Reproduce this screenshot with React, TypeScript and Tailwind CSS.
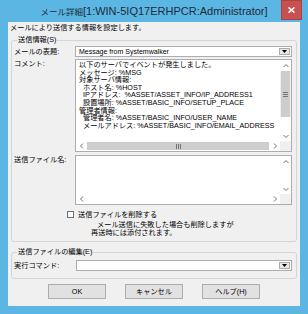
import React from "react";

const ui = "font-['Liberation_Sans','Noto_Sans_CJK_JP',sans-serif]";

function Chevron({ dir }: { dir: "up" | "down" | "left" | "right" }) {
  const pts = {
    up: "1.5,5 4,2.5 6.5,5",
    down: "1.5,3 4,5.5 6.5,3",
    left: "5,1.5 2.5,4 5,6.5",
    right: "3,1.5 5.5,4 3,6.5",
  }[dir];
  return (
    <svg width="8" height="8" viewBox="0 0 8 8">
      <polyline points={pts} fill="none" stroke="#606060" strokeWidth="0.9" />
    </svg>
  );
}

function VScroll({ thumb }: { thumb: boolean }) {
  return (
    <div className="flex w-[11px] flex-col bg-[#f0f0f0]">
      <div className="flex h-[11px] items-center justify-center bg-white">
        <Chevron dir="up" />
      </div>
      {thumb ? (
        <>
          <div className="mx-[1px] flex h-[46px] items-center justify-center bg-[#cdcdcd]">
            <svg width="5" height="5" viewBox="0 0 5 5">
              <path d="M0 0.5H5M0 2.5H5M0 4.5H5" stroke="#606060" strokeWidth="0.8" />
            </svg>
          </div>
          <div className="flex-1 bg-white" />
        </>
      ) : (
        <div className="flex-1 bg-white" />
      )}
      <div className="flex h-[11px] items-center justify-center bg-white">
        <Chevron dir="down" />
      </div>
    </div>
  );
}

function HScroll({ thumb }: { thumb: boolean }) {
  return (
    <div className="flex h-[10px] bg-white">
      <div className="flex w-[11px] items-center justify-center">
        <Chevron dir="left" />
      </div>
      {thumb ? (
        <div className="my-[1px] flex flex-1 items-center justify-center bg-[#cdcdcd]">
          <svg width="5" height="5" viewBox="0 0 5 5">
            <path d="M0.5 0V5M2.5 0V5M4.5 0V5" stroke="#606060" strokeWidth="0.8" />
          </svg>
        </div>
      ) : (
        <div className="flex-1" />
      )}
      <div className="flex w-[11px] items-center justify-center">
        <Chevron dir="right" />
      </div>
      <div className="w-[11px] bg-[#f0f0f0]" />
    </div>
  );
}

function Combo({ text }: { text?: string }) {
  return (
    <div className="flex h-[11px] items-center border border-[#abadb3] bg-white">
      <span className="flex-1 overflow-hidden whitespace-nowrap pl-[3px] text-[7px] leading-[9px]">
        {text}
      </span>
      <div className="mr-[1px] flex h-[7px] w-[11px] items-center justify-center border border-[#acacac] bg-[#e8e8e8]">
        <svg width="5" height="3" viewBox="0 0 5 3">
          <path d="M0 0H5L2.5 3Z" fill="#000" />
        </svg>
      </div>
    </div>
  );
}

const commentLines = [
  "以下のサーバでイベントが発生しました。",
  "メッセージ: %MSG",
  "対象サーバ情報:",
  "  ホスト名: %HOST",
  "  IPアドレス:  %ASSET/ASSET_INFO/IP_ADDRESS1",
  "  設置場所: %ASSET/BASIC_INFO/SETUP_PLACE",
  "管理者情報:",
  "  管理者名: %ASSET/BASIC_INFO/USER_NAME",
  "  メールアドレス: %ASSET/BASIC_INFO/EMAIL_ADDRESS",
];

export default function App() {
  return (
    <div className={`flex h-[314px] w-[308px] flex-col bg-[#5cb6e4] text-black ${ui}`}>
      <div className="relative flex h-[22px] justify-center pt-[4px]">
        <span className="text-[11px] leading-[14px] text-[#1d2a38]">
          <span className="text-[8.5px]">メール詳細</span>[1:WIN-5IQ17ERHPCR:Administrator]
        </span>
        <div className="absolute right-[6px] top-0 flex h-[20px] w-[21px] items-center justify-center border border-[#a94440] bg-[#c75050]">
          <svg width="7" height="6" viewBox="0 0 7 6">
            <path d="M0.5 0.5L6.5 5.5M6.5 0.5L0.5 5.5" stroke="#fff" strokeWidth="1.6" />
          </svg>
        </div>
      </div>

      <div className="mx-[8px] mb-[8px] flex flex-1 flex-col bg-[#f0f0f0] text-[7.2px]">
        <p className="pl-[2px] leading-[12px]">メールにより送信する情報を設定します。</p>

        <fieldset className="mx-[3px] mt-[1px] rounded-[3px] border border-[#d5d5d5] pb-[4px] pl-[2px] pr-[4px]">
          <legend className="ml-[3px] px-[1px] leading-[10px]">送信情報(S)</legend>
          <div className="mt-[1px] grid grid-cols-[61px_1fr] gap-y-[2px]">
            <span className="leading-[11px]">メールの表題:</span>
            <Combo text="Message from Systemwalker" />

            <span className="leading-[10px]">コメント:</span>
            <div className="flex h-[93px] flex-col border border-[#abadb3] bg-white">
              <div className="flex flex-1 overflow-hidden">
                <div className="flex-1 overflow-hidden whitespace-pre pl-[3px] pt-[1px] text-[7.2px] leading-[7.6px]">
                  {commentLines.map((l) => (
                    <div key={l}>{l}</div>
                  ))}
                </div>
                <VScroll thumb />
              </div>
              <HScroll thumb />
            </div>

            <span className="mt-[1px] leading-[10px]">送信ファイル名:</span>
            <div className="mt-[1px] flex h-[50px] flex-col border border-[#abadb3] bg-white">
              <div className="flex flex-1">
                <div className="flex-1" />
                <VScroll thumb={false} />
              </div>
              <HScroll thumb={false} />
            </div>
          </div>

          <div className="mt-[5px] flex items-center pl-[53px]">
            <div className="h-[7px] w-[7px] border border-[#707070] bg-white" />
            <span className="ml-[4px] leading-[9px]">送信ファイルを削除する</span>
          </div>
          <p className="mt-[2px] pl-[83px] leading-[8px]">メール送信に失敗した場合も削除しますが</p>
          <p className="pl-[77px] leading-[8px]">再送時には添付されます。</p>
        </fieldset>

        <fieldset className="mx-[3px] mt-[5px] rounded-[3px] border border-[#d5d5d5] pb-[7px] pl-[2px] pr-[4px]">
          <legend className="ml-[3px] px-[1px] leading-[10px]">送信ファイルの編集(E)</legend>
          <div className="mt-[3px] grid grid-cols-[62px_1fr] items-center">
            <span className="leading-[11px]">実行コマンド:</span>
            <Combo />
          </div>
        </fieldset>

        <div className="mt-[5px] flex justify-center gap-[19px]">
          {["OK", "キャンセル", "ヘルプ(H)"].map((b) => (
            <div
              key={b}
              className="flex h-[15px] w-[58px] items-center justify-center border border-[#adadad] bg-[#e1e1e1] leading-[10px]"
            >
              {b}
            </div>
          ))}
        </div>
      </div>
    </div>
  );
}
